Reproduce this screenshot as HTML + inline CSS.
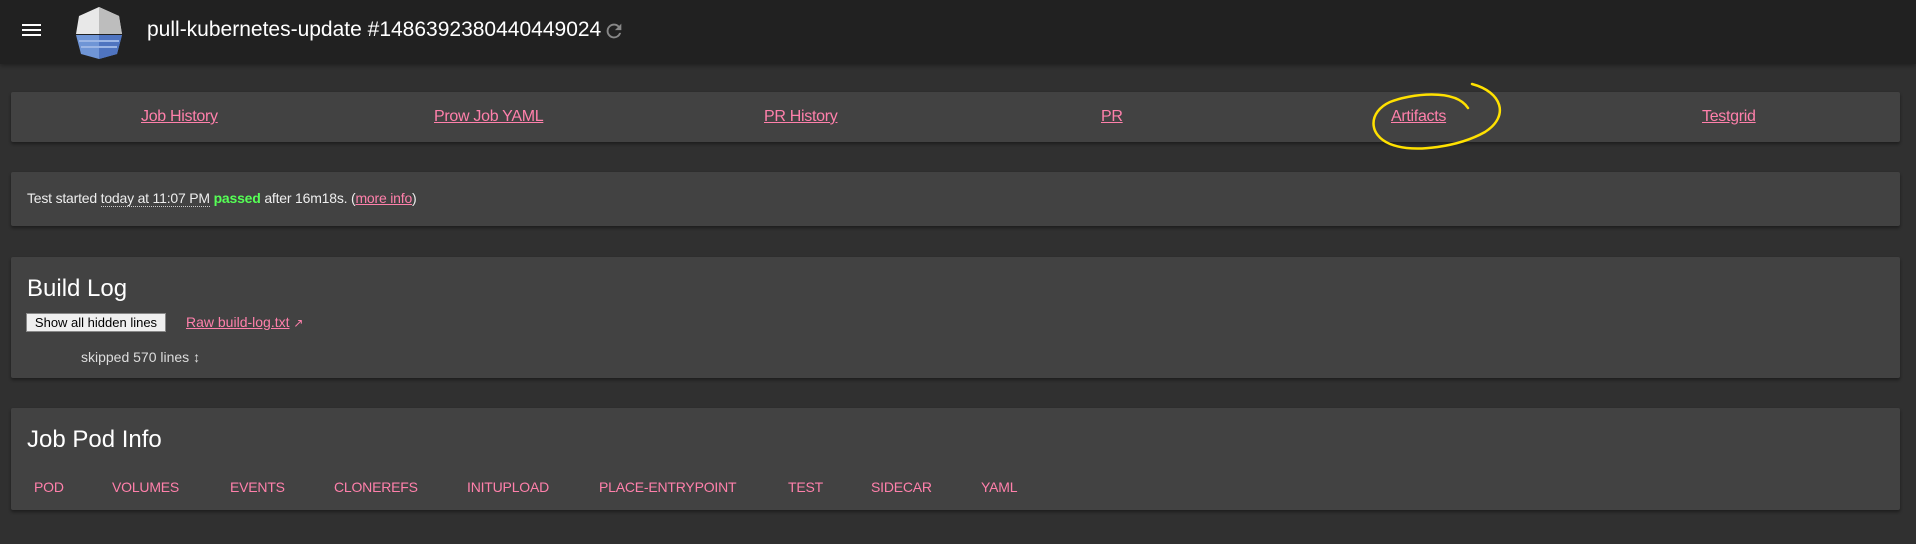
<!DOCTYPE html>
<html><head><meta charset="utf-8"><style>
*{margin:0;padding:0;box-sizing:border-box}
body{width:1916px;height:544px;background:#303030;font-family:"Liberation Sans",sans-serif;position:relative;overflow:hidden;color:#fff}
.hdr{position:absolute;left:0;top:0;width:1916px;height:64px;background:#212121;box-shadow:0 2px 4px rgba(0,0,0,.3)}
.panel{position:absolute;left:11px;width:1889px;background:#424242;box-shadow:0 2px 3px rgba(0,0,0,.4);border-radius:2px}
a{color:#ff80ab;text-decoration:underline}
.nav a{position:absolute;top:16px;font-size:16px;letter-spacing:-0.3px}
.tab{position:absolute;top:71px;font-size:14px;color:#ff80ab;letter-spacing:-0.2px}
</style></head><body>
<div class="hdr">
 <div style="position:absolute;left:22px;top:24px;width:19px;height:2px;background:#fff;box-shadow:0 5px 0 #fff,0 10px 0 #fff"></div>
 <svg style="position:absolute;left:73px;top:6px" width="52" height="54" viewBox="0 0 52 54">
  <polygon points="26,1 46,10 49,28 3,28 6,10" fill="#e8e8e8"/>
  <polygon points="26,1 46,10 49,28 26,28" fill="#bdbdbd"/>
  <polygon points="3,29 49,29 44,48 26,53 8,48" fill="#6f95d6"/>
  <polygon points="26,29 49,29 44,48 26,53" fill="#4f74c0"/>
  <line x1="6" y1="35" x2="46" y2="35" stroke="#9bb5e5" stroke-width="2"/>
  <line x1="8" y1="41" x2="44" y2="41" stroke="#9bb5e5" stroke-width="2"/>
 </svg>
 <div style="position:absolute;left:147px;top:18px;font-size:21px;color:#fff">pull-kubernetes-update #1486392380440449024</div>
 <svg style="position:absolute;left:603px;top:20px" width="22" height="22" viewBox="0 0 24 24"><path d="M17.65 6.35A7.96 7.96 0 0 0 12 4a8 8 0 1 0 7.73 10h-2.08A6 6 0 1 1 12 6c1.66 0 3.14.69 4.22 1.78L13 11h7V4l-2.35 2.35z" fill="#888"/></svg>
</div>

<div class="panel nav" style="top:92px;height:50px">
 <a style="left:130px">Job History</a>
 <a style="left:423px">Prow Job YAML</a>
 <a style="left:753px">PR History</a>
 <a style="left:1090px">PR</a>
 <a style="left:1380px">Artifacts</a>
 <a style="left:1691px">Testgrid</a>
</div>
<svg style="position:absolute;left:1360px;top:80px" width="160" height="80" viewBox="0 0 160 80">
 <path d="M108 28 C95 8 50 14 30 22 C8 32 8 55 30 64 C55 74 100 66 125 52 C150 36 142 12 112 4" fill="none" stroke="#ffe100" stroke-width="2.5" stroke-linecap="round"/>
</svg>

<div class="panel" style="top:172px;height:54px">
 <div style="position:absolute;left:16px;top:18px;font-size:14px;color:#eee;letter-spacing:-0.2px">Test started <span style="border-bottom:1px dotted #ccc">today at 11:07 PM</span> <b style="color:#5f5">passed</b> after 16m18s. (<a>more info</a>)</div>
</div>

<div class="panel" style="top:257px;height:121px">
 <div style="position:absolute;left:16px;top:18px;font-size:24px">Build Log</div>
 <div style="position:absolute;left:15px;top:56px;width:140px;height:19px;background:#efefef;border:1px solid #888;color:#000;font-size:13px;line-height:17px;text-align:center">Show all hidden lines</div>
 <div style="position:absolute;left:175px;top:57px;font-size:14px"><a>Raw build-log.txt</a> <span style="color:#ff80ab;font-size:12px">&#x2197;</span></div>
 <div style="position:absolute;left:70px;top:92px;font-size:14px;color:#ddd">skipped 570 lines &#x2195;</div>
</div>

<div class="panel" style="top:408px;height:102px">
 <div style="position:absolute;left:16px;top:18px;font-size:24px">Job Pod Info</div>
 <span class="tab" style="left:23px">POD</span>
 <span class="tab" style="left:101px">VOLUMES</span>
 <span class="tab" style="left:219px">EVENTS</span>
 <span class="tab" style="left:323px">CLONEREFS</span>
 <span class="tab" style="left:456px">INITUPLOAD</span>
 <span class="tab" style="left:588px">PLACE-ENTRYPOINT</span>
 <span class="tab" style="left:777px">TEST</span>
 <span class="tab" style="left:860px">SIDECAR</span>
 <span class="tab" style="left:970px">YAML</span>
</div>
</body></html>
